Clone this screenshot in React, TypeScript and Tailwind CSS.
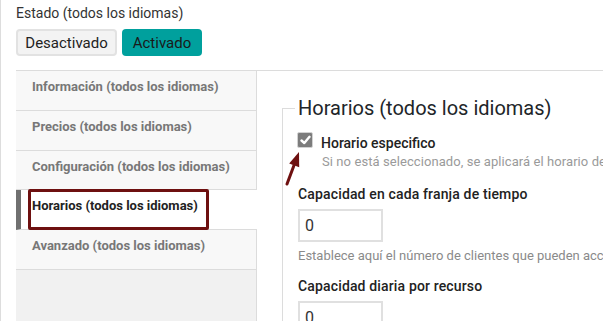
import React from "react";

const tabs = [
  { label: "Información (todos los idiomas)", h: "h-[40px]" },
  { label: "Precios (todos los idiomas)", h: "h-[40px]" },
  { label: "Configuración (todos los idiomas)", h: "h-[39px]" },
  { label: "Horarios (todos los idiomas)", h: "h-[40px]", active: true },
  { label: "Avanzado (todos los idiomas)", h: "h-[40px]" },
];

export default function App() {
  return (
    <div className="relative w-[603px] h-[321px] overflow-hidden bg-white border-l border-[#dddddd] pl-[15px] font-['Roboto','Liberation_Sans',sans-serif] text-[#212529]">
      {/* Estado */}
      <div className="pt-[3px] text-[14px] leading-[20px] text-[#333]">Estado (todos los idiomas)</div>
      <div className="mt-[6px] flex gap-[5px]">
        <button className="h-[27px] w-[101px] rounded-[4px] border-2 border-[#e2e2e2] bg-[#f3f3f3] text-[15px] leading-[20px] text-[#222]">
          Desactivado
        </button>
        <button className="h-[27px] w-[80px] rounded-[4px] bg-[#00a09d] text-[15px] leading-[20px] text-[#1a1a1a]">
          Activado
        </button>
      </div>

      {/* Tabs + content */}
      <div className="mt-[14px] flex border-t border-[#dcdcdc] h-[260px]">
        <div className="w-[241px] flex flex-col">
          {tabs.map((t) =>
            t.active ? (
              <div
                key={t.label}
                className={`${t.h} border-b border-[#dcdcdc] border-l-[5px] border-l-[#707070] bg-white pl-[11px] pt-[8px] text-[13px] leading-[16px] font-bold text-[#222]`}
              >
                {t.label}
              </div>
            ) : (
              <div
                key={t.label}
                className={`${t.h} border-b border-r border-[#dcdcdc] bg-[#f8f8f8] pl-[16px] pt-[8px] text-[13px] leading-[16px] font-bold text-[#777]`}
              >
                {t.label}
              </div>
            ),
          )}
          <div className="flex-1 border-r border-[#dcdcdc] bg-[#f1f1f1]" />
        </div>

        <div className="flex-1 min-w-0 overflow-hidden pl-[25px]">
          <fieldset className="mt-[25px] min-w-0 border-l border-t border-[#dcdcdc] pl-[15px] h-[300px]">
            <legend className="ml-[-3px] w-[400px] px-[3px] text-[20px] leading-[24px] text-[#212529] whitespace-nowrap">
              Horarios (todos los idiomas)
            </legend>

            <div className="mt-[12px] flex items-start whitespace-nowrap">
              <div className="ml-[-1px] flex h-[16px] w-[16px] shrink-0 items-center justify-center rounded-[2px] border border-[#d2d2d2] bg-[#7c7c7c]">
                <svg width="11" height="10" viewBox="0 0 11 10">
                  <path d="M1.5 5.5 L4.3 8 L9.5 1.8" fill="none" stroke="white" strokeWidth="2.4" strokeLinecap="round" strokeLinejoin="round" />
                </svg>
              </div>
              <div className="ml-[8px] mt-[1px]">
                <div className="text-[14px] leading-[20px] font-medium text-[#222]">Horario especifico</div>
                <div className="ml-[1px] text-[13px] leading-[18px] tracking-[0.08px] text-[#9a9a9a]">
                  Si no está seleccionado, se aplicará el horario del recurso
                </div>
              </div>
            </div>

            <div className="mt-[13px] text-[14px] leading-[20px] font-medium tracking-[0.15px] text-[#222] whitespace-nowrap">
              Capacidad en cada franja de tiempo
            </div>
            <div className="mt-[5px] flex h-[33px] w-[85px] items-center border-2 border-[#e0e0e0] pl-[5px] text-[16px] text-[#333]">
              0
            </div>
            <div className="mt-[5px] text-[13px] leading-[18px] text-[#8a8a8a] whitespace-nowrap">
              Establece aquí el número de clientes que pueden acceder al mismo tiempo
            </div>

            <div className="mt-[11px] text-[14px] leading-[20px] font-medium tracking-[0.15px] text-[#222] whitespace-nowrap">
              Capacidad diaria por recurso
            </div>
            <div className="mt-[5px] flex h-[33px] w-[85px] items-center border-2 border-[#e0e0e0] pl-[5px] text-[16px] text-[#333]">
              0
            </div>
          </fieldset>
        </div>
      </div>

      {/* Annotation: highlight box */}
      <div className="absolute left-[27px] top-[189px] h-[41px] w-[181px] rounded-[2px] border-[3px] border-[#6e1010]" />

      {/* Annotation: arrow */}
      <svg className="absolute left-0 top-0" width="603" height="321" viewBox="0 0 603 321">
        <line x1="286" y1="184" x2="293.5" y2="164" stroke="#6e1010" strokeWidth="3" strokeLinecap="round" />
        <polygon points="298,152 298.2,167.2 288.2,163.4" fill="#6e1010" />
      </svg>
    </div>
  );
}
